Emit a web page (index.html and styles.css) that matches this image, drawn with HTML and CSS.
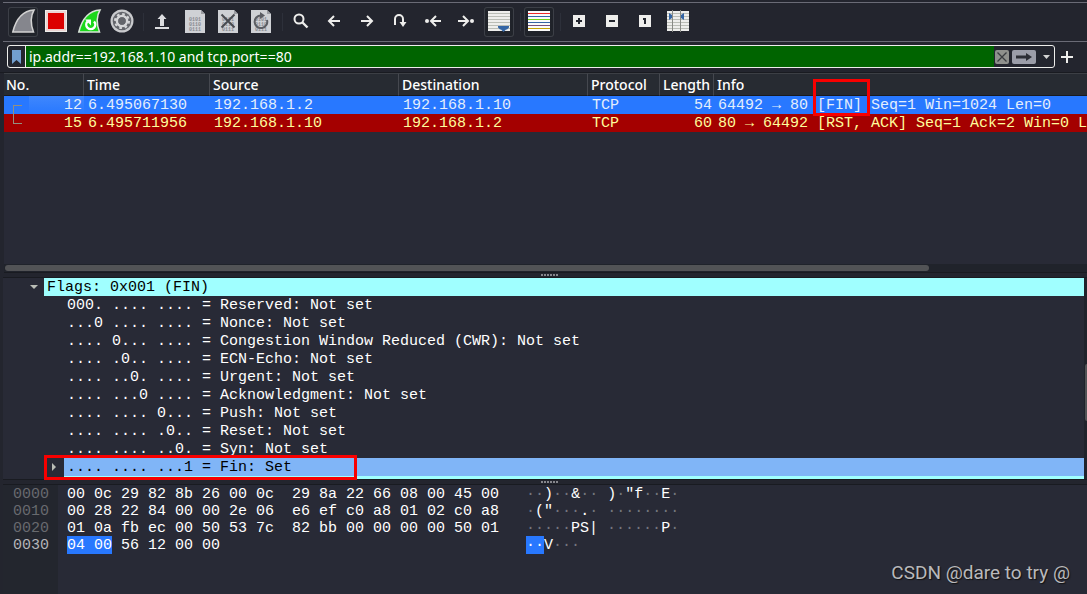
FILE: index.html
```html
<!DOCTYPE html>
<html lang="en">
<head>
<meta charset="utf-8">
<title>Packet capture</title>
<link rel="stylesheet" href="styles.css">
</head>
<body>
<svg class="defs" width="0" height="0" aria-hidden="true">
  <defs>
    <g id="file">
      <path d="M5 3H21L25 7V26H5Z" fill="#cfd1d5"/>
      <path d="M21 3V7H25Z" fill="#9a9ca1"/>
      <g class="bits"><text x="9" y="14">0101</text><text x="9" y="19">0110</text><text x="9" y="24">0111</text></g>
    </g>
    <path id="fin" d="M4.800 25C7 16 12 4 26 3C22.500 9 22.500 17 25.500 25Z" stroke-width="1.500"/>
    <g id="left" fill="none" stroke="#eeeeec" stroke-width="2"><path d="M21 14H10M15 9L10 14L15 19"/></g>
    <g id="right" fill="none" stroke="#eeeeec" stroke-width="2"><path d="M9 14H20M15 9L20 14L15 19"/></g>
  </defs>
</svg>
<main class="app">
  <div class="toolbar" role="toolbar">
    <button class="tool framed" aria-label="Start capture"><svg viewBox="0 0 30 30"><use href="#fin" fill="#85868d" stroke="#d2d2d2"/></svg></button>
    <button class="tool" aria-label="Stop capture"><svg viewBox="0 0 30 30"><rect x="4.500" y="3.500" width="21" height="21" fill="#dc0000" stroke="#eeeeec"/><rect x="6" y="5" width="18" height="18" fill="none" stroke="#ecd4d2" stroke-width="2"/></svg></button>
    <button class="tool" aria-label="Restart capture"><svg viewBox="0 0 30 30"><use href="#fin" fill="#1bd81b" stroke="#d8e4d8"/><path d="M13.500 14.500A4.500 4.500 0 1 0 20 14.500" fill="none" stroke="#fff" stroke-width="2.400"/><path d="M11 12.500H17V18.500Z" fill="#fff"/></svg></button>
    <button class="tool" aria-label="Capture options"><svg viewBox="0 0 30 30"><circle cx="15" cy="14" r="11.500" fill="#c9cacd"/><circle cx="15" cy="14" r="9.300" fill="#63656b"/><circle cx="15" cy="14" r="7" fill="none" stroke="#d5d6d8" stroke-width="2" stroke-dasharray="2.700 2.798"/><circle cx="15" cy="14" r="5" fill="none" stroke="#d5d6d8" stroke-width="2.600"/><circle cx="15" cy="14" r="3.700" fill="#63656b"/></svg></button>
    <span class="sep"></span>
    <button class="tool" aria-label="Open"><svg viewBox="0 0 30 30"><path d="M15 7L19.500 12H17V19H13V12H10.500Z" fill="#dcdde0"/><path d="M8 20H22V22H8Z" fill="#dcdde0"/></svg></button>
    <button class="tool" aria-label="Save"><svg viewBox="0 0 30 30"><use href="#file"/></svg></button>
    <button class="tool" aria-label="Close file"><svg viewBox="0 0 30 30"><use href="#file"/><path d="M8.500 7.500L21.500 20.500M21.500 7.500L8.500 20.500" stroke="#484a50" stroke-width="2"/></svg></button>
    <button class="tool" aria-label="Reload file"><svg viewBox="0 0 30 30"><use href="#file"/><path d="M21 13A6.300 6.300 0 1 1 15 8.500" fill="none" stroke="#5b5d63" stroke-width="2"/><path d="M14 5L19 8.500L14 12Z" fill="#5b5d63"/></svg></button>
    <span class="sep"></span>
    <button class="tool" aria-label="Find"><svg viewBox="0 0 30 30"><circle cx="13" cy="12" r="4.500" fill="none" stroke="#eeeeec" stroke-width="2"/><path d="M16.500 15.500L21.500 20.500" stroke="#eeeeec" stroke-width="2.400"/></svg></button>
    <button class="tool" aria-label="Back"><svg viewBox="0 0 30 30"><use href="#left"/></svg></button>
    <button class="tool" aria-label="Forward"><svg viewBox="0 0 30 30"><use href="#right"/></svg></button>
    <button class="tool" aria-label="Go to packet"><svg viewBox="0 0 30 30"><path d="M10 18V12A4 4 0 0 1 18 12V16" fill="none" stroke="#eeeeec" stroke-width="2"/><path d="M14.500 15H21.500L18 20Z" fill="#eeeeec"/></svg></button>
    <button class="tool" aria-label="First packet"><svg viewBox="0 0 30 30"><circle cx="9" cy="14" r="2" fill="#eeeeec"/><path d="M23 14H13.500M18 9L13 14L18 19" fill="none" stroke="#eeeeec" stroke-width="2"/></svg></button>
    <button class="tool" aria-label="Last packet"><svg viewBox="0 0 30 30"><path d="M7 14H16.500M12 9L17 14L12 19" fill="none" stroke="#eeeeec" stroke-width="2"/><circle cx="21" cy="14" r="2" fill="#eeeeec"/></svg></button>
    <button class="tool framed" aria-label="Auto scroll"><svg viewBox="0 0 30 30"><path d="M4 4H26V24H4Z" fill="#eeeeec"/><path d="M4 6.500H26M4 9.500H26M4 12.500H26M4 15.500H26M4 18.500H26M4 21.500H26" stroke="#babdb6"/><path d="M14 19H25V20.500L23 22.500H22L19.500 25L17 22.500H16L14 20.500Z" fill="#3465a4"/></svg></button>
    <span class="sep"></span>
    <button class="tool framed" aria-label="Colorize"><svg viewBox="0 0 30 30"><path d="M4 4H26V24H4Z" fill="#fafafa"/><path d="M4 6.500H26" stroke="#ef2929"/><path d="M4 9.500H26M4 15.500H26" stroke="#3465a4"/><path d="M4 12.500H26" stroke="#73d216"/><path d="M4 18.500H26" stroke="#75507b"/><path d="M4 21.500H26" stroke="#c4a000"/></svg></button>
    <span class="sep"></span>
    <button class="tool" aria-label="Zoom in"><svg viewBox="0 0 30 30"><rect x="9" y="8" width="12" height="12" fill="#eeeeec"/><path d="M12 14H18M15 11V17" stroke="#23262e" stroke-width="2"/></svg></button>
    <button class="tool" aria-label="Zoom out"><svg viewBox="0 0 30 30"><rect x="9" y="8" width="12" height="12" fill="#eeeeec"/><path d="M12 14H18" stroke="#23262e" stroke-width="2"/></svg></button>
    <button class="tool" aria-label="Normal size"><svg viewBox="0 0 30 30"><rect x="9" y="8" width="12" height="12" fill="#eeeeec"/><path d="M13 12H15V17" fill="none" stroke="#23262e" stroke-width="2"/></svg></button>
    <button class="tool" aria-label="Resize columns"><svg viewBox="0 0 30 30"><path d="M4 4H26V24H4Z" fill="#eeeeec"/><path d="M4 6.500H26M4 9.500H26M4 12.500H26M4 15.500H26M4 18.500H26M4 21.500H26" stroke="#babdb6"/><path d="M9.500 3V25M17.500 3V25" stroke="#888a85"/><path d="M6 6L9 8V11L6 13ZM21 6L18 8V11L21 13Z" fill="#3465a4"/></svg></button>
  </div>

  <form class="filter-row">
    <div class="filter">
      <button type="button" class="bookmark" aria-label="Bookmarks"><svg viewBox="0 0 9 14" width="9" height="14"><path d="M0 0H9V14L4.500 10L0 14Z" fill="#729fcf"/></svg></button>
      <input class="filter-input" type="text" aria-label="Display filter" value="ip.addr==192.168.1.10 and tcp.port==80">
      <div class="filter-actions">
        <button type="button" class="clear" aria-label="Clear"><svg viewBox="0 0 14 14" width="14" height="14"><path d="M2.500 2.500L11.500 11.500M11.500 2.500L2.500 11.500" stroke="#3a3c40" stroke-width="1.300"/></svg></button>
        <button type="button" class="apply" aria-label="Apply"><svg viewBox="0 0 24 14" width="24" height="14"><path d="M4 5.500H14V3L20 7L14 11V8.500H4Z" fill="#2c2e35"/></svg></button>
        <button type="button" class="history" aria-label="Recent filters"><svg viewBox="0 0 7 4" width="7" height="4"><path d="M0 0H7L3.500 4Z" fill="#d3d3d3"/></svg></button>
      </div>
    </div>
    <button type="button" class="add" aria-label="Add filter"><svg viewBox="0 0 12 12" width="12" height="12"><path d="M0 6H12M6 0V12" stroke="#eeeeec" stroke-width="2"/></svg></button>
  </form>

  <section class="packets">
    <table class="packet-table">
      <colgroup><col class="c-no"><col class="c-time"><col class="c-addr"><col class="c-addr"><col class="c-proto"><col class="c-len"><col></colgroup>
      <thead>
        <tr><th>No.</th><th>Time</th><th>Source</th><th>Destination</th><th>Protocol</th><th>Length</th><th>Info</th></tr>
      </thead>
      <tbody>
        <tr class="selected"><td class="num"><span class="bracket"></span>12</td><td>6.495067130</td><td>192.168.1.2</td><td>192.168.1.10</td><td>TCP</td><td class="num">54</td><td>64492 → 80 <span class="marked">[FIN]</span> Seq=1 Win=1024 Len=0</td></tr>
        <tr class="reset"><td class="num">15</td><td>6.495711956</td><td>192.168.1.10</td><td>192.168.1.2</td><td>TCP</td><td class="num">60</td><td>80 → 64492 [RST, ACK] Seq=1 Ack=2 Win=0 Len=0</td></tr>
      </tbody>
    </table>
    <div class="hscroll"><div class="thumb"></div></div>
  </section>
  <div class="splitter"><span class="grip"></span></div>

  <section class="details">
    <div class="tree">
      <div class="node flags"><svg class="caret" viewBox="0 0 8 4" width="8" height="4"><path d="M0 0H8L4 4Z" fill="#babdb6"/></svg><span class="label">Flags: 0x001 (FIN)</span></div>
      <div class="leaf">000. .... .... = Reserved: Not set</div>
      <div class="leaf">...0 .... .... = Nonce: Not set</div>
      <div class="leaf">.... 0... .... = Congestion Window Reduced (CWR): Not set</div>
      <div class="leaf">.... .0.. .... = ECN-Echo: Not set</div>
      <div class="leaf">.... ..0. .... = Urgent: Not set</div>
      <div class="leaf">.... ...0 .... = Acknowledgment: Not set</div>
      <div class="leaf">.... .... 0... = Push: Not set</div>
      <div class="leaf">.... .... .0.. = Reset: Not set</div>
      <div class="leaf">.... .... ..0. = Syn: Not set</div>
      <div class="node fin"><svg class="caret" viewBox="0 0 4 8" width="4" height="8"><path d="M0 0V8L4 4Z" fill="#babdb6"/></svg><span class="label">.... .... ...1 = Fin: Set</span></div>
      <div class="next"></div>
    </div>
    <div class="vscroll"><div class="vthumb"></div></div>
  </section>
  <div class="splitter"><span class="grip"></span></div>

  <section class="bytes">
    <pre class="offsets">0000
0010
0020
<b>0030</b></pre>
    <pre class="hex">00 0c 29 82 8b 26 00 0c  29 8a 22 66 08 00 45 00
00 28 22 84 00 00 2e 06  e6 ef c0 a8 01 02 c0 a8
01 0a fb ec 00 50 53 7c  82 bb 00 00 00 00 50 01
<mark>04 00</mark> 56 12 00 00</pre>
    <pre class="ascii"><i>··</i>)<i>··</i>&amp;<i>··</i> )<i>·</i>"f<i>··</i>E<i>·</i>
<i>·</i>("<i>···</i>.<i>·</i> <i>········</i>
<i>·····</i>PS| <i>······</i>P<i>·</i>
<mark>··</mark>V<i>···</i></pre>
  </section>
  <div class="watermark">CSDN @dare to try @</div>
</main>
</body>
</html>
```

FILE: styles.css
```css
*, *::after { box-sizing: border-box; }
body {
  margin: 0;
  background: #23252e;
  color: #fff;
  font-family: "Noto Sans", sans-serif;
  font-size: 14px;
}
button { padding: 0; border: 0; background: none; display: flex; align-items: center; justify-content: center; }
svg { display: block; flex: none; }
pre { margin: 0; }
.defs { position: absolute; }
.app {
  position: relative;
  display: flex;
  flex-direction: column;
  min-height: 100vh;
  overflow: hidden;
}

/* Toolbar */
.toolbar {
  display: flex;
  gap: 3px;
  margin: 2px 0 0 3px;
  padding: 4px 5px;
  border-top: 1px solid #6a6b76;
  border-bottom: 1px solid #6a6b76;
}
.tool { width: 30px; height: 30px; border-radius: 3px; }
.tool svg { width: 30px; height: 30px; }
.framed { background: #20232a; box-shadow: inset 0 0 0 1px #3c3f47; }
.sep { width: 4px; height: 18px; align-self: center; border-right: 1px solid #2d303a; }
.bits { font: bold 5px "Liberation Mono", monospace; fill: #898b91; }

/* Display filter */
.filter-row { display: flex; align-items: center; gap: 6px; padding: 3px 14px 4px 7px; border-bottom: 1px solid #191b21; }
.filter {
  flex: 1;
  display: flex;
  height: 23px;
  border: 1px solid #eeeeec;
  border-radius: 3px;
  overflow: hidden;
}
.bookmark { width: 17px; }
.filter-input {
  flex: 1;
  min-width: 0;
  padding: 0 3px;
  border: 0;
  border-left: 1px solid #eeeeec;
  outline: 0;
  background: #006400;
  color: #fff;
  font: 14px "Noto Sans", sans-serif;
}
.filter-actions { display: flex; align-items: center; gap: 3px; padding: 0 2px 0 1px; }
.clear { width: 14px; height: 14px; border-radius: 2px; background: #8f908c; }
.apply { width: 24px; height: 14px; border-radius: 2px; background: #9b9da8; }
.history { width: 13px; height: 14px; padding-left: 2px; }
.add { width: 12px; height: 12px; }

/* Packet list */
.packets { flex: 1; display: flex; flex-direction: column; justify-content: space-between; margin-left: 4px; background: #282a36; }
.packet-table { width: 100%; table-layout: fixed; border-collapse: separate; border-spacing: 0; }
.c-no { width: 80px; }
.c-time { width: 126px; }
.c-addr { width: 189px; }
.c-proto { width: 72px; }
.c-len { width: 54px; }
.packet-table th {
  height: 23px;
  padding: 1px 0 0 3px;
  border-top: 1px solid #3c3f45;
  border-bottom: 1px solid #191b20;
  border-right: 1px solid #45484f;
  background: #272b32;
  line-height: 20px;
  font-weight: 500;
  text-align: left;
}
.packet-table th:first-child { padding-left: 2px; }
.packet-table th:last-child { border-right: 0; }
.packet-table td {
  height: 18px;
  padding: 1px 1px 0 4px;
  font: 15px/17px "Liberation Mono", monospace;
  white-space: nowrap;
}
.packet-table td.num { padding-right: 2px; text-align: right; }
.packet-table td:first-child { position: relative; }
.selected { background: #2878ff; color: #e4eefc; }
.selected td:first-child { background: linear-gradient(#3f87fd, #2878ff) right / 55px 100% no-repeat; }
.reset { background: #a40000; color: #fffc9c; }
.bracket {
  position: absolute;
  z-index: 1;
  left: 9px;
  top: 9px;
  width: 9px;
  height: 19px;
  border: 1px solid #948f80;
  border-right: 0;
}
.marked { position: relative; }
.marked::after {
  content: "";
  position: absolute;
  z-index: 2;
  left: -4px;
  top: -18px;
  width: 57px;
  height: 37px;
  border: 3px solid #f80000;
}
.hscroll { height: 9px; padding: 1px; background: #20232b; border-bottom: 1px solid #191b21; }
.thumb { width: 85.500%; height: 6px; border-radius: 3px; background: #525356; }
.splitter { display: flex; justify-content: center; align-items: center; height: 4px; padding-left: 12px; }
.grip { width: 17px; height: 2px; background: repeating-linear-gradient(90deg, #85868c 0 2px, transparent 2px 3px); }

/* Packet details */
.details {
  display: flex;
  margin-left: 3px;
  border-top: 1px solid #191b21;
  border-bottom: 1px solid #191b21;
  background: #282a36;
  font: 15px/17px "Liberation Mono", monospace;
}
.tree { flex: 1; min-width: 0; }
.leaf { padding: 1px 0 0 64px; white-space: pre; }
.node { position: relative; display: flex; align-items: center; color: #000; white-space: pre; }
.node .label { flex: 1; padding: 1px 0 0 3px; }
.flags { gap: 6px; padding-left: 27px; }
.flags .label { background: #a0ffff; }
.fin { gap: 8px; padding-left: 49px; }
.fin .label { background: #80b5f7; }
.fin::after {
  content: "";
  position: absolute;
  z-index: 2;
  left: 41px;
  top: -3px;
  width: 313px;
  height: 25px;
  border: 3px solid #f80000;
}
.next { height: 3px; margin-left: 61px; background: #a0ffff; }
.vscroll { width: 3px; padding: 86px 0 0 1px; background: #20232b; }
.vthumb { height: 57px; border-radius: 2px 0 0 2px; background: #525356; }

/* Packet bytes */
.bytes {
  display: flex;
  margin-left: 3px;
  border-top: 1px solid #191b21;
  background: #282a36;
  font-size: 15px;
  line-height: 17px;
}
.bytes pre { font-family: "Liberation Mono", monospace; padding-top: 1px; padding-bottom: 40px; }
.bytes .offsets { width: 55px; padding-left: 10px; background: #23262e; color: #686a6e; }
.offsets b { font-weight: 400; color: #b4b5b8; }
.bytes .hex { padding-left: 9px; }
.bytes .ascii { padding-left: 27px; }
.ascii i { font-style: normal; color: #74767e; }
.bytes mark { padding-top: 1px; background: #2878ff; color: #fff; }

.watermark {
  position: absolute;
  right: 17px;
  bottom: 8px;
  color: #b9b9bb;
  font: 19px/26px Roboto, sans-serif;
  text-shadow: 1px 1px 1px #111;
}
```
